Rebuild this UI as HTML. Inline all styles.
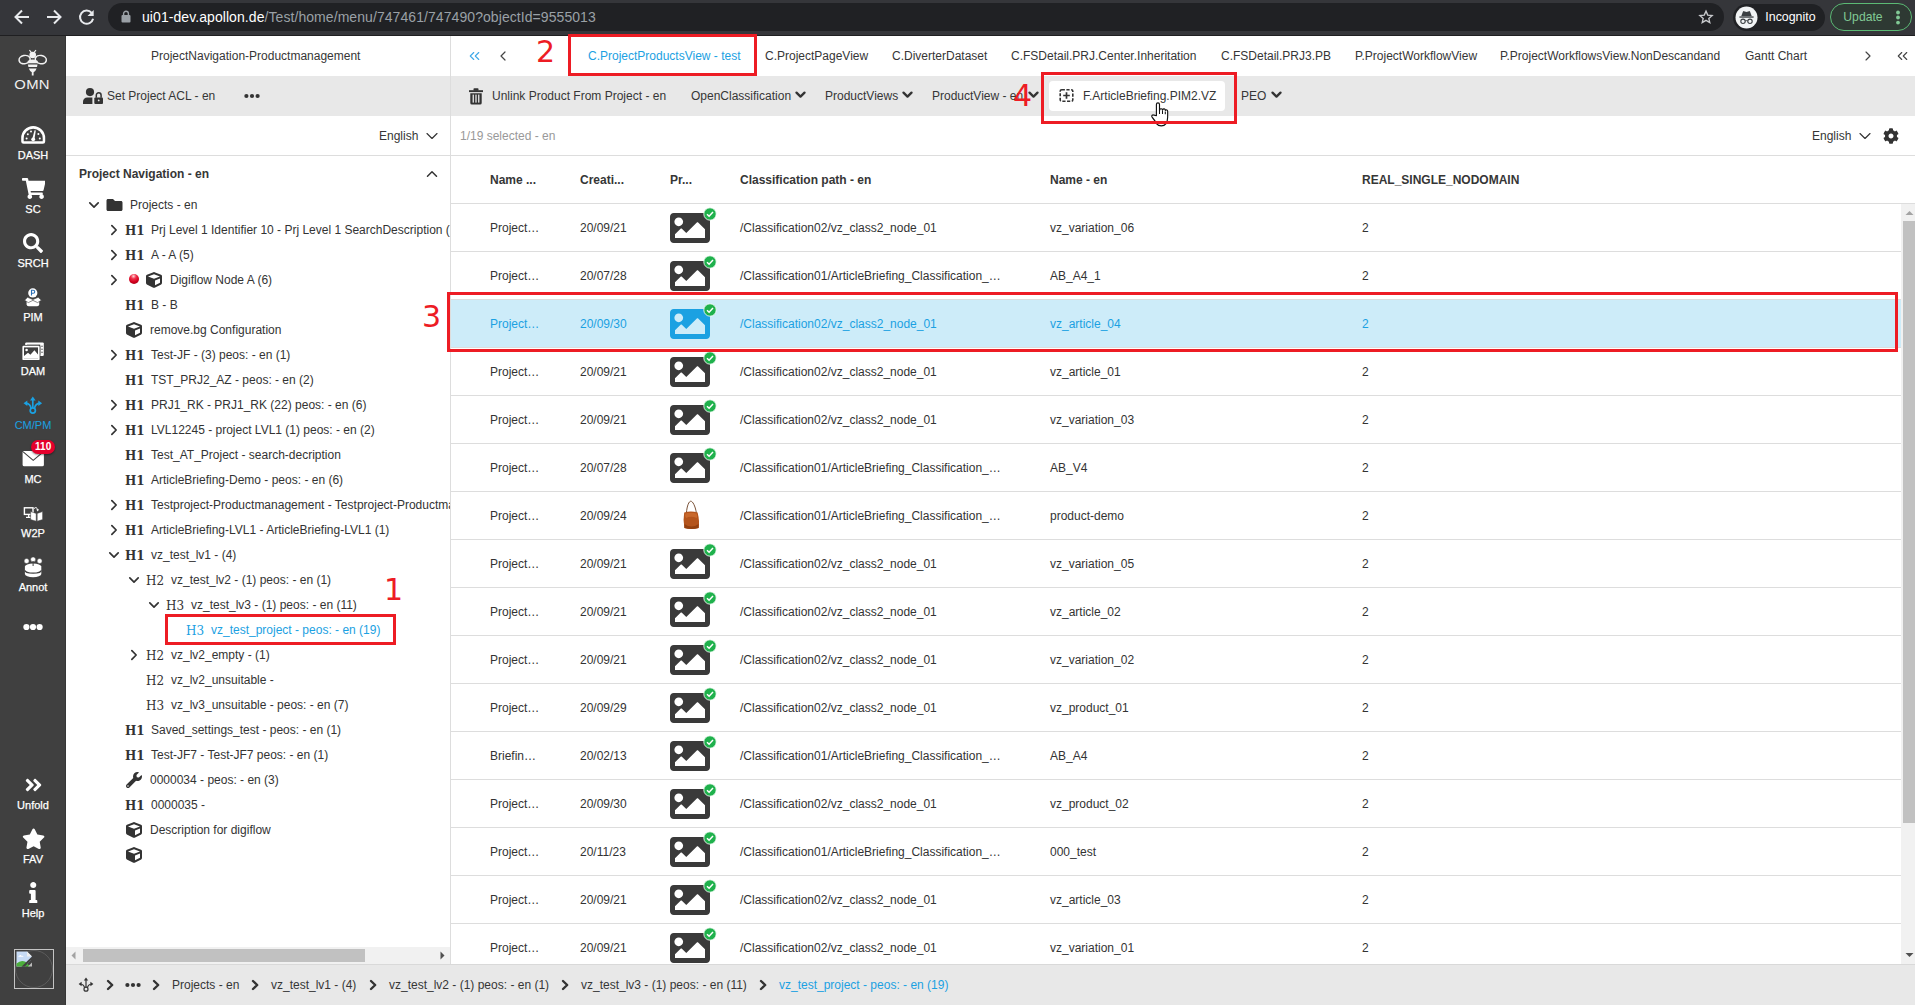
<!DOCTYPE html><html lang="en"><head><meta charset="utf-8"><title>OMN</title><style>
*{box-sizing:border-box;margin:0;padding:0}
html,body{width:1915px;height:1005px;overflow:hidden;background:#fff}
body{font-family:"Liberation Sans",Arial,sans-serif;font-size:12px;color:#363636;position:relative}
.abs,.t,svg.i{position:absolute}
.t{white-space:nowrap;line-height:14px;height:14px}
.b{font-weight:bold}
.blue{color:#1ba1e2}
.w{color:#fff}
#chrome{position:absolute;left:0;top:0;width:1915px;height:36px;background:#35363a;border-bottom:1px solid #1f1f21}
#omni{position:absolute;left:108px;top:3px;width:1616px;height:28px;border-radius:14px;background:#202124}
#side{position:absolute;left:0;top:36px;width:66px;height:969px;background:#404040;border-right:1px solid #363636}
.sl{position:absolute;left:0;width:66px;text-align:center;color:#fff;font-size:11px;line-height:14px;height:14px;-webkit-text-stroke:0.2px #fff}
.grey{position:absolute;background:#e8e8e8}
.hl{position:absolute;height:1px;background:#ddd}
.red{position:absolute;border:3px solid #ed1c24}
.rn{position:absolute;color:#ed1c24;font-family:"DejaVu Sans",sans-serif;font-size:30px;line-height:32px;height:32px}
.hx{position:absolute;font-family:"DejaVu Serif","Liberation Serif",serif;font-size:12px;line-height:14px;height:14px;color:#333;white-space:nowrap}
.hx.b1{font-weight:bold}
</style></head><body>
<div id="chrome"><div id="omni"></div></div>
<svg class="i" style="left:0;top:0" width="110" height="35"><g transform="translate(22,17)" fill="none" stroke="#e8eaed" stroke-width="2" stroke-linecap="butt" stroke-linejoin="miter"><path d="M7,0 H-6 M0,-6.5 L-6.5,0 L0,6.5"/></g></svg>
<svg class="i" style="left:0;top:0" width="110" height="35"><g transform="translate(54,17) scale(-1,1)" fill="none" stroke="#e8eaed" stroke-width="2" stroke-linecap="butt" stroke-linejoin="miter"><path d="M7,0 H-6 M0,-6.5 L-6.5,0 L0,6.5"/></g></svg>
<svg class="i" style="left:78px;top:9px" width="17" height="17" viewBox="-8.5 -8.5 17 17"><path d="M5.2,-4.6 A6.6,6.6 0 1 0 6.6,1.2" fill="none" stroke="#e8eaed" stroke-width="2"/><path d="M7.2,-7.6 V-1.4 H1 Z" fill="#e8eaed"/></svg>
<svg class="i" style="left:121.3px;top:10.3px" width="10" height="13" viewBox="0 0 10 13"><rect x="0.5" y="5" width="9" height="7.5" rx="1" fill="#9aa0a6"/><path d="M2.6,5.5 V3.6 a2.4,2.4 0 0 1 4.8,0 V5.5" fill="none" stroke="#9aa0a6" stroke-width="1.4"/></svg>
<div class="t" style="left:142px;top:8px;font-size:14px;line-height:18px;height:18px;letter-spacing:0.07px;color:#9aa0a6"><span style="color:#fff">ui01-dev.apollon.de</span>/Test/home/menu/747461/747490?objectId=9555013</div>
<svg class="i" style="left:1697.7px;top:9.4px" width="16" height="16" viewBox="0 0 24 24"><path d="M12,3.2 L14.6,9.2 L21.2,9.8 L16.2,14.1 L17.7,20.5 L12,17.1 L6.3,20.5 L7.8,14.1 L2.8,9.8 L9.4,9.2 Z" fill="none" stroke="#c8cacd" stroke-width="2" stroke-linejoin="miter"/></svg>
<div class="abs" style="left:1733px;top:4px;width:92px;height:27px;border-radius:14px;background:#202124"></div>
<svg class="i" style="left:1735px;top:6px" width="23" height="23" viewBox="0 0 23 23"><circle cx="11.5" cy="11.5" r="11" fill="#f1f3f4"/><path d="M6.2,10.2 L8,5.6 Q8.3,4.9 9,5.2 L11.5,6 L14,5.2 Q14.7,4.9 15,5.6 L16.8,10.2 Z" fill="#3c4043"/><rect x="4.4" y="10.4" width="14.2" height="1.3" fill="#3c4043"/><circle cx="8" cy="15.3" r="2.2" fill="none" stroke="#3c4043" stroke-width="1.1"/><circle cx="15" cy="15.3" r="2.2" fill="none" stroke="#3c4043" stroke-width="1.1"/><path d="M10.2,15 Q11.5,14.2 12.8,15" fill="none" stroke="#3c4043" stroke-width="1"/></svg>
<div class="t w" style="left:1765.3px;top:8px;font-size:12.4px;line-height:18px;height:18px">Incognito</div>
<div class="abs" style="left:1830px;top:3px;width:82px;height:28px;border-radius:14px;border:1.4px solid #5bb974;background:#2e3933"></div>
<div class="t" style="left:1843.3px;top:8px;font-size:12.2px;line-height:18px;height:18px;color:#81c995">Update</div>
<svg class="i" style="left:1895.4px;top:9px" width="6" height="17" viewBox="0 0 6 17"><circle cx="3" cy="3.5" r="1.9" fill="#81c995"/><circle cx="3" cy="8.5" r="1.9" fill="#81c995"/><circle cx="3" cy="13.6" r="1.9" fill="#81c995"/></svg>
<div id="side"></div>
<svg class="i" style="left:0;top:0" width="66" height="1005" viewBox="0 0 66 1005"><g fill="none" stroke="#f2f2f2" stroke-width="1.5"><ellipse cx="24.6" cy="59.6" rx="5.6" ry="4.1" transform="rotate(-12 24.6 59.6)"/><ellipse cx="40.8" cy="59.6" rx="5.6" ry="4.1" transform="rotate(12 40.8 59.6)"/><path d="M31.3,52.4 L29.4,50.2 M34.1,52.4 L36,50.2" stroke-width="1.1"/></g><circle cx="32.7" cy="55" r="3.3" fill="#f2f2f2"/><path d="M27.6,61 Q32.7,58.2 37.8,61 L37.6,63.2 H27.8 Z M27.9,64.6 H37.5 L37,67 H28.4 Z M28.8,68.4 H36.6 Q35.6,71.2 33.6,72.2 V75.6 H31.8 V72.2 Q29.8,71.2 28.8,68.4 Z" fill="#f2f2f2"/><path d="M21.2,138 A12,12 0 0 1 45.2,138 V141.4 a2.3,2.3 0 0 1 -2.3,2.3 H23.5 a2.3,2.3 0 0 1 -2.3,-2.3 Z" fill="#fff"/><path d="M23.7,138.2 A9.5,9.5 0 0 1 42.7,138.2 V141.2 H23.7 Z" fill="#404040"/><g fill="#fff"><circle cx="26.6" cy="138.4" r="1"/><circle cx="27.8" cy="134.2" r="1"/><circle cx="31" cy="131.4" r="1"/><circle cx="38.4" cy="134" r="1"/><circle cx="39.8" cy="138.4" r="1"/><circle cx="33.2" cy="139.3" r="1.9"/><path d="M32.2,139 L34.6,130.2 L35.8,130.5 L34.4,139.4 Z"/></g><circle cx="32.8" cy="292.9" r="4.6" fill="#fff"/><path d="M31.5,295.6 V290.2 H33.2 a1.55,1.55 0 0 1 0,3.1 H31.5" fill="none" stroke="#2a6fb5" stroke-width="1.1"/><path d="M26.6,300.5 H39.2 V304.3 Q39.2,306.2 37.2,306.2 H28.6 Q26.6,306.2 26.6,304.3 Z" fill="#fff"/><path d="M24.6,300.2 L27.6,297.3 L32.9,299.6 L38.2,297.3 L41.4,300.2 L37.6,302.6 L32.9,300.4 L28.3,302.6 Z" fill="#fff" stroke="#404040" stroke-width="0.6"/><rect x="25.2" y="342.4" width="18.6" height="13.6" rx="1.2" fill="#fff"/><rect x="26.8" y="344.6" width="13.4" height="10" fill="#404040"/><g fill="#404040"><circle cx="42" cy="346.2" r="0.7"/><circle cx="42" cy="349.2" r="0.7"/><circle cx="42" cy="352.2" r="0.7"/></g><rect x="21.6" y="345" width="18.8" height="15.8" rx="1.4" fill="#404040"/><rect x="22.4" y="345.8" width="17.2" height="14.3" rx="1.2" fill="#fff"/><rect x="24" y="347.4" width="14" height="11" fill="#404040"/><circle cx="26.6" cy="350" r="1.3" fill="#fff"/><path d="M24,358.4 V356 L28,352.8 L30.4,354.8 L34.4,350.2 L38,354.6 V358.4 Z" fill="#fff"/><g fill="none" stroke="#1ba1e2" stroke-width="1.7"><circle cx="32.8" cy="410.6" r="2.6"/><path d="M32.8,408 V399.5"/><path d="M31.2,408.6 Q30.2,403.6 25.6,403.2"/><path d="M34.4,408.6 Q35.4,403.6 40,403.2"/></g><g fill="#1ba1e2"><path d="M32.8,396.6 L35.6,400.4 H30 Z"/><path d="M23.5,403.2 L27.3,400.5 V405.9 Z"/><path d="M42.1,403.2 L38.3,400.5 V405.9 Z"/></g><rect x="22.6" y="451" width="21.3" height="15.3" rx="1.6" fill="#fff"/><path d="M23.2,451.8 L33.2,460.4 L43.3,451.8" fill="none" stroke="#404040" stroke-width="1.1"/><rect x="24.4" y="507.8" width="8.6" height="6.6" fill="none" stroke="#fff" stroke-width="1.4"/><path d="M26,517.4 H31.4 M28.7,514.6 V517.2" stroke="#fff" stroke-width="1.3" fill="none"/><path d="M34,508.6 Q36.6,506 37.6,509.8" fill="none" stroke="#fff" stroke-width="1"/><path d="M36.2,509.6 L37.8,511.6 L39,509.2 Z" fill="#fff"/><path d="M30.6,511.6 L36.2,513.4 V521.2 L30.6,519.6 Z M37.2,513.4 L42.6,511.6 V519.6 L37.2,521.2 Z" fill="#fff" stroke="#404040" stroke-width="0.5"/><path d="M24.9,566.6 V574 a8.2,3.2 0 0 0 16.4,0 V566.6 Z" fill="#fff"/><ellipse cx="33.1" cy="566.6" rx="8.2" ry="3" fill="#fff"/><path d="M24.9,570.2 a8.2,3 0 0 0 16.4,0" fill="none" stroke="#404040" stroke-width="1.2"/><g fill="#fff" stroke="#404040" stroke-width="0.5"><circle cx="26.6" cy="561" r="2.5"/><circle cx="39.6" cy="561" r="2.5"/><circle cx="33.1" cy="559.4" r="2.5"/></g><path d="M33.1,561 V566" stroke="#404040" stroke-width="1" /></svg>
<div class="sl" style="top:77px;left:-0.8px;font-size:13.5px;line-height:16px;height:16px;letter-spacing:0.3px;transform:scaleX(1.1);transform-origin:32px 0;color:#f0f0f0;-webkit-text-stroke:0">OMN</div>
<div class="sl" style="top:148px;color:#fff;-webkit-text-stroke:0.25px #fff">DASH</div>
<div class="sl" style="top:202px;color:#fff;-webkit-text-stroke:0.25px #fff">SC</div>
<div class="sl" style="top:256px;color:#fff;-webkit-text-stroke:0.25px #fff">SRCH</div>
<div class="sl" style="top:310px;color:#fff;-webkit-text-stroke:0.25px #fff">PIM</div>
<div class="sl" style="top:364px;color:#fff;-webkit-text-stroke:0.25px #fff">DAM</div>
<div class="sl" style="top:418px;color:#1ba1e2;-webkit-text-stroke:0px #1ba1e2">CM/PM</div>
<div class="sl" style="top:472px;color:#fff;-webkit-text-stroke:0.25px #fff">MC</div>
<div class="sl" style="top:526px;color:#fff;-webkit-text-stroke:0.25px #fff">W2P</div>
<div class="sl" style="top:580px;color:#fff;-webkit-text-stroke:0.25px #fff">Annot</div>
<div class="sl" style="top:798px;color:#fff;-webkit-text-stroke:0.25px #fff">Unfold</div>
<div class="sl" style="top:852px;color:#fff;-webkit-text-stroke:0.25px #fff">FAV</div>
<div class="sl" style="top:906px;color:#fff;-webkit-text-stroke:0.25px #fff">Help</div>
<svg class="i" style="left:21px;top:620.6px" width="24" height="12" viewBox="-12 -6 24 12"><circle cx="-6.6" cy="0" r="3.1" fill="#fff"/><circle cx="0" cy="0" r="3.1" fill="#fff"/><circle cx="6.6" cy="0" r="3.1" fill="#fff"/></svg>
<svg class="i" style="left:21.5px;top:178px" width="23.5" height="21" viewBox="0 0 576 512" preserveAspectRatio="xMidYMid meet"><path d="M528.12 301.319l47.273-208C578.806 78.301 567.391 64 551.99 64H159.208l-9.166-44.81C147.758 8.021 137.93 0 126.529 0H24C10.745 0 0 10.745 0 24v16c0 13.255 10.745 24 24 24h69.883l70.248 343.435C147.325 417.1 136 435.222 136 456c0 30.928 25.072 56 56 56s56-25.072 56-56c0-15.674-6.447-29.835-16.824-40h209.647C430.447 426.165 424 440.326 424 456c0 30.928 25.072 56 56 56s56-25.072 56-56c0-22.172-12.888-41.332-31.579-50.405l5.517-24.276c3.413-15.018-8.002-29.319-23.403-29.319H218.117l-6.545-32h293.145c11.206 0 20.92-7.754 23.403-18.681z" fill="#fff" /></svg>
<svg class="i" style="left:22.5px;top:233px" width="20" height="20" viewBox="0 0 512 512" preserveAspectRatio="xMidYMid meet"><path d="M505 442.7L405.3 343c-4.5-4.5-10.6-7-17-7H372c27.6-35.3 44-79.7 44-128C416 93.1 322.9 0 208 0S0 93.1 0 208s93.1 208 208 208c48.3 0 92.7-16.4 128-44v16.3c0 6.4 2.5 12.5 7 17l99.7 99.7c9.4 9.4 24.6 9.4 33.9 0l28.3-28.3c9.4-9.4 9.4-24.6.1-34zM208 336c-70.7 0-128-57.2-128-128 0-70.7 57.2-128 128-128 70.7 0 128 57.2 128 128 0 70.7-57.2 128-128 128z" fill="#fff" /></svg>
<svg class="i" style="left:21.6px;top:827.6px" width="23.2" height="21.6" viewBox="0 0 576 512" preserveAspectRatio="xMidYMid meet"><path d="M259.3 17.8L194 150.2 47.9 171.5c-26.2 3.8-36.7 36.1-17.7 54.6l105.7 103-25 145.5c-4.5 26.3 23.2 46 46.4 33.7L288 439.6l130.7 68.7c23.2 12.2 50.9-7.4 46.4-33.7l-25-145.5 105.7-103c19-18.5 8.5-50.8-17.7-54.6L382 150.2 316.7 17.8c-11.7-23.6-45.6-23.9-57.4 0z" fill="#fff" /></svg>
<svg class="i" style="left:29px;top:881.8px" width="8.5" height="21.6" viewBox="0 0 192 512" preserveAspectRatio="xMidYMid meet"><path d="M20 424.229h20V279.771H20c-11.046 0-20-8.954-20-20V212c0-11.046 8.954-20 20-20h112c11.046 0 20 8.954 20 20v212.229h20c11.046 0 20 8.954 20 20V492c0 11.046-8.954 20-20 20H20c-11.046 0-20-8.954-20-20v-47.771c0-11.046 8.954-20 20-20zM96 0C56.235 0 24 32.235 24 72s32.235 72 72 72 72-32.235 72-72S135.764 0 96 0z" fill="#fff" /></svg>
<svg class="i" style="left:23.6px;top:774.6px" width="19" height="20" viewBox="0 0 448 512" preserveAspectRatio="xMidYMid meet"><path d="M224.3 273l-136 136c-9.4 9.4-24.6 9.4-33.9 0l-22.6-22.6c-9.4-9.4-9.4-24.6 0-33.9l96.4-96.4-96.4-96.4c-9.4-9.4-9.4-24.6 0-33.9L54.3 103c9.4-9.4 24.6-9.4 33.9 0l136 136c9.5 9.4 9.5 24.6.1 34zm192-34l-136-136c-9.4-9.4-24.6-9.4-33.9 0l-22.6 22.6c-9.4 9.4-9.4 24.6 0 33.9l96.4 96.4-96.4 96.4c-9.4 9.4-9.4 24.6 0 33.9l22.6 22.6c9.4 9.4 24.6 9.4 33.9 0l136-136c9.4-9.2 9.4-24.4 0-33.8z" fill="#fff" /></svg>
<div class="abs" style="left:31.4px;top:440px;width:23.6px;height:14px;border-radius:7px;background:#e4002b;box-shadow:0 1px 2px rgba(0,0,0,.45);color:#fff;font-size:10px;font-weight:bold;line-height:14px;text-align:center">110</div>
<div class="abs" style="left:14px;top:949px;width:40px;height:40px;border:1px solid #c4c4c4"></div>
<div class="abs" style="left:15px;top:949.5px;width:38px;height:38px;border-radius:19px;border:1px solid #5c5c5c"></div>
<svg class="i" style="left:16px;top:951px" width="17" height="17" viewBox="0 0 17 17"><path d="M0.5,0.5 H11 L16,5.5 V8 L9,15.5 H0.5 Z" fill="#c7dbf5"/><path d="M11,0.5 V5.5 H16 Z" fill="#eee"/><path d="M0.5,15.5 V12.5 Q5,8.5 9.5,10.8 L14,15.5 Z" fill="#4caf3c"/><path d="M3,5 q1.4,-2 2.8,0 q1.2,-0.6 1.8,0.8 H2.2 Q2.2,5 3,5" fill="#fff"/><path d="M16,8.2 L8.6,15.8 H5.4 L16,5.6 Z" fill="#404040"/><path d="M12,15.5 H16 V11.6 Z" fill="#bcbcbc"/></svg>

<div class="t " style="left:151px;top:49px;">ProjectNavigation-Productmanagement</div>
<div class="grey" style="left:66px;top:76px;width:1849px;height:40px"></div>
<div class="t " style="left:107px;top:89px;">Set Project ACL - en</div>
<svg class="i" style="left:82px;top:87px" width="22" height="18" viewBox="82 87 22 18"><circle cx="90" cy="92.1" r="4.1" fill="#333"/><path d="M83,104 V101.6 a4.2,4.2 0 0 1 4.2,-4.2 h5.2 v6.6 Z" fill="#333"/><rect x="94.3" y="97.4" width="8.7" height="6.6" rx="1" fill="#333"/><path d="M96.3,97.8 V95.2 a2.4,2.4 0 0 1 4.8,0 V97.8" fill="none" stroke="#333" stroke-width="1.5"/><circle cx="98.7" cy="100.4" r="0.9" fill="#e8e8e8"/></svg>
<svg class="i" style="left:240.4px;top:90px" width="24" height="12" viewBox="-12 -6 24 12"><circle cx="-5.6" cy="0" r="2.1" fill="#333"/><circle cx="0" cy="0" r="2.1" fill="#333"/><circle cx="5.6" cy="0" r="2.1" fill="#333"/></svg>
<div class="t " style="left:379px;top:129px;">English</div>
<svg class="i" style="left:422px;top:126px" width="20" height="20" viewBox="-10 -10 20 20"><path d="M-5,-2.5 L0,2.5 L5,-2.5" fill="none" stroke="#333" stroke-width="1.15" stroke-linecap="round" stroke-linejoin="round"/></svg>
<div class="hl" style="left:66px;top:155px;width:1849px"></div>
<div class="t b" style="left:79px;top:167px;">Project Navigation - en</div>
<svg class="i" style="left:422px;top:164.2px" width="20" height="20" viewBox="-10 -10 20 20"><path d="M-4.5,2.25 L0,-2.25 L4.5,2.25" fill="none" stroke="#333" stroke-width="1.5" stroke-linecap="round" stroke-linejoin="round"/></svg>
<div class="abs" style="left:66px;top:160px;width:384px;height:780px;overflow:hidden"><div class="abs" style="left:-66px;top:-160px;width:600px;height:1005px">
<svg class="i" style="left:83.8px;top:195.1px" width="20" height="20" viewBox="-10 -10 20 20"><path d="M-4.2,-2.1 L0,2.1 L4.2,-2.1" fill="none" stroke="#333" stroke-width="1.7" stroke-linecap="round" stroke-linejoin="round"/></svg>
<svg class="i" style="left:105.5px;top:196.7px" width="17" height="16" viewBox="0 0 512 512" preserveAspectRatio="xMidYMid meet"><path d="M464 128H272l-64-64H48C21.49 64 0 85.49 0 112v288c0 26.51 21.49 48 48 48h416c26.51 0 48-21.49 48-48V176c0-26.51-21.49-48-48-48z" fill="#333" /></svg>
<div class="t " style="left:130px;top:198px;color:#333">Projects - en</div>
<svg class="i" style="left:104px;top:219.8px" width="20" height="20" viewBox="-10 -10 20 20"><path d="M-2.15,-4.3 L2.15,0 L-2.15,4.3" fill="none" stroke="#333" stroke-width="1.7" stroke-linecap="round" stroke-linejoin="round"/></svg>
<div class="hx b1" style="left:125px;top:224px;color:#333">H1</div>
<div class="t " style="left:151px;top:223px;color:#333">Prj Level 1 Identifier 10 - Prj Level 1 SearchDescription (</div>
<svg class="i" style="left:104px;top:244.8px" width="20" height="20" viewBox="-10 -10 20 20"><path d="M-2.15,-4.3 L2.15,0 L-2.15,4.3" fill="none" stroke="#333" stroke-width="1.7" stroke-linecap="round" stroke-linejoin="round"/></svg>
<div class="hx b1" style="left:125px;top:249px;color:#333">H1</div>
<div class="t " style="left:151px;top:248px;color:#333">A - A (5)</div>
<svg class="i" style="left:104px;top:269.8px" width="20" height="20" viewBox="-10 -10 20 20"><path d="M-2.15,-4.3 L2.15,0 L-2.15,4.3" fill="none" stroke="#333" stroke-width="1.7" stroke-linecap="round" stroke-linejoin="round"/></svg>
<div class="abs" style="left:129px;top:274px;width:10px;height:10px;border-radius:5px;background:radial-gradient(circle at 45% 22%,#ffd9d9 0,#f0304a 28%,#d3001e 60%,#8a0012 100%)"></div>
<svg class="i" style="left:146px;top:271.8px" width="16" height="16" viewBox="0 0 512 512" preserveAspectRatio="xMidYMid meet"><path d="M239.1 6.3l-208 78c-18.7 7-31.1 25-31.1 45v225.1c0 18.2 10.3 34.8 26.5 42.9l208 104c13.5 6.8 29.4 6.8 42.9 0l208-104c16.3-8.1 26.5-24.8 26.5-42.9V129.3c0-20-12.4-37.9-31.1-44.9l-208-78C262 2.2 250 2.2 239.1 6.3zM256 68.4l192 72v1.1l-192 78-192-78v-1.1l192-72zm32 356V275.5l160-65v133.9l-160 80z" fill="#333" /></svg>
<div class="t " style="left:170px;top:273px;color:#333">Digiflow Node A (6)</div>
<div class="hx b1" style="left:125px;top:299px;color:#333">H1</div>
<div class="t " style="left:151px;top:298px;color:#333">B - B</div>
<svg class="i" style="left:126px;top:321.8px" width="16" height="16" viewBox="0 0 512 512" preserveAspectRatio="xMidYMid meet"><path d="M239.1 6.3l-208 78c-18.7 7-31.1 25-31.1 45v225.1c0 18.2 10.3 34.8 26.5 42.9l208 104c13.5 6.8 29.4 6.8 42.9 0l208-104c16.3-8.1 26.5-24.8 26.5-42.9V129.3c0-20-12.4-37.9-31.1-44.9l-208-78C262 2.2 250 2.2 239.1 6.3zM256 68.4l192 72v1.1l-192 78-192-78v-1.1l192-72zm32 356V275.5l160-65v133.9l-160 80z" fill="#333" /></svg>
<div class="t " style="left:150px;top:323px;color:#333">remove.bg Configuration</div>
<svg class="i" style="left:104px;top:344.8px" width="20" height="20" viewBox="-10 -10 20 20"><path d="M-2.15,-4.3 L2.15,0 L-2.15,4.3" fill="none" stroke="#333" stroke-width="1.7" stroke-linecap="round" stroke-linejoin="round"/></svg>
<div class="hx b1" style="left:125px;top:349px;color:#333">H1</div>
<div class="t " style="left:151px;top:348px;color:#333">Test-JF - (3) peos: - en (1)</div>
<div class="hx b1" style="left:125px;top:374px;color:#333">H1</div>
<div class="t " style="left:151px;top:373px;color:#333">TST_PRJ2_AZ - peos: - en (2)</div>
<svg class="i" style="left:104px;top:394.8px" width="20" height="20" viewBox="-10 -10 20 20"><path d="M-2.15,-4.3 L2.15,0 L-2.15,4.3" fill="none" stroke="#333" stroke-width="1.7" stroke-linecap="round" stroke-linejoin="round"/></svg>
<div class="hx b1" style="left:125px;top:399px;color:#333">H1</div>
<div class="t " style="left:151px;top:398px;color:#333">PRJ1_RK - PRJ1_RK (22) peos: - en (6)</div>
<svg class="i" style="left:104px;top:419.8px" width="20" height="20" viewBox="-10 -10 20 20"><path d="M-2.15,-4.3 L2.15,0 L-2.15,4.3" fill="none" stroke="#333" stroke-width="1.7" stroke-linecap="round" stroke-linejoin="round"/></svg>
<div class="hx b1" style="left:125px;top:424px;color:#333">H1</div>
<div class="t " style="left:151px;top:423px;color:#333">LVL12245 - project LVL1 (1) peos: - en (2)</div>
<div class="hx b1" style="left:125px;top:449px;color:#333">H1</div>
<div class="t " style="left:151px;top:448px;color:#333">Test_AT_Project - search-decription</div>
<div class="hx b1" style="left:125px;top:474px;color:#333">H1</div>
<div class="t " style="left:151px;top:473px;color:#333">ArticleBriefing-Demo - peos: - en (6)</div>
<svg class="i" style="left:104px;top:494.8px" width="20" height="20" viewBox="-10 -10 20 20"><path d="M-2.15,-4.3 L2.15,0 L-2.15,4.3" fill="none" stroke="#333" stroke-width="1.7" stroke-linecap="round" stroke-linejoin="round"/></svg>
<div class="hx b1" style="left:125px;top:499px;color:#333">H1</div>
<div class="t " style="left:151px;top:498px;color:#333">Testproject-Productmanagement - Testproject-Productmanagement</div>
<svg class="i" style="left:104px;top:519.8px" width="20" height="20" viewBox="-10 -10 20 20"><path d="M-2.15,-4.3 L2.15,0 L-2.15,4.3" fill="none" stroke="#333" stroke-width="1.7" stroke-linecap="round" stroke-linejoin="round"/></svg>
<div class="hx b1" style="left:125px;top:524px;color:#333">H1</div>
<div class="t " style="left:151px;top:523px;color:#333">ArticleBriefing-LVL1 - ArticleBriefing-LVL1 (1)</div>
<svg class="i" style="left:103.8px;top:545.1px" width="20" height="20" viewBox="-10 -10 20 20"><path d="M-4.2,-2.1 L0,2.1 L4.2,-2.1" fill="none" stroke="#333" stroke-width="1.7" stroke-linecap="round" stroke-linejoin="round"/></svg>
<div class="hx b1" style="left:125px;top:549px;color:#333">H1</div>
<div class="t " style="left:151px;top:548px;color:#333">vz_test_lv1 - (4)</div>
<svg class="i" style="left:123.80000000000001px;top:570.1px" width="20" height="20" viewBox="-10 -10 20 20"><path d="M-4.2,-2.1 L0,2.1 L4.2,-2.1" fill="none" stroke="#333" stroke-width="1.7" stroke-linecap="round" stroke-linejoin="round"/></svg>
<div class="hx" style="left:146px;top:574px;color:#333">H2</div>
<div class="t " style="left:171px;top:573px;color:#333">vz_test_lv2 - (1) peos: - en (1)</div>
<svg class="i" style="left:143.8px;top:595.1px" width="20" height="20" viewBox="-10 -10 20 20"><path d="M-4.2,-2.1 L0,2.1 L4.2,-2.1" fill="none" stroke="#333" stroke-width="1.7" stroke-linecap="round" stroke-linejoin="round"/></svg>
<div class="hx" style="left:166px;top:599px;color:#333">H3</div>
<div class="t " style="left:191px;top:598px;color:#333">vz_test_lv3 - (1) peos: - en (11)</div>
<div class="hx" style="left:186px;top:624px;color:#1ba1e2">H3</div>
<div class="t " style="left:211px;top:623px;color:#1ba1e2">vz_test_project - peos: - en (19)</div>
<svg class="i" style="left:124px;top:644.8px" width="20" height="20" viewBox="-10 -10 20 20"><path d="M-2.15,-4.3 L2.15,0 L-2.15,4.3" fill="none" stroke="#333" stroke-width="1.7" stroke-linecap="round" stroke-linejoin="round"/></svg>
<div class="hx" style="left:146px;top:649px;color:#333">H2</div>
<div class="t " style="left:171px;top:648px;color:#333">vz_lv2_empty - (1)</div>
<div class="hx" style="left:146px;top:674px;color:#333">H2</div>
<div class="t " style="left:171px;top:673px;color:#333">vz_lv2_unsuitable -</div>
<div class="hx" style="left:146px;top:699px;color:#333">H3</div>
<div class="t " style="left:171px;top:698px;color:#333">vz_lv3_unsuitable - peos: - en (7)</div>
<div class="hx b1" style="left:125px;top:724px;color:#333">H1</div>
<div class="t " style="left:151px;top:723px;color:#333">Saved_settings_test - peos: - en (1)</div>
<div class="hx b1" style="left:125px;top:749px;color:#333">H1</div>
<div class="t " style="left:151px;top:748px;color:#333">Test-JF7 - Test-JF7 peos: - en (1)</div>
<svg class="i" style="left:126px;top:771.8px" width="16" height="16" viewBox="0 0 512 512" preserveAspectRatio="xMidYMid meet"><path d="M507.73 109.1c-2.24-9.03-13.54-12.09-20.12-5.51l-74.36 74.36-67.88-11.31-11.31-67.88 74.36-74.36c6.62-6.62 3.43-17.9-5.66-20.16-47.38-11.74-99.55.91-136.58 37.93-39.64 39.64-50.55 97.1-34.05 147.2L18.74 402.76c-24.99 24.99-24.99 65.51 0 90.5 24.99 24.99 65.51 24.99 90.5 0l213.21-213.21c50.12 16.71 107.47 5.68 147.37-34.22 37.07-37.07 49.7-89.32 37.91-136.73zM64 472c-13.25 0-24-10.75-24-24 0-13.26 10.75-24 24-24s24 10.74 24 24c0 13.25-10.75 24-24 24z" fill="#333" /></svg>
<div class="t " style="left:150px;top:773px;color:#333">0000034 - peos: - en (3)</div>
<div class="hx b1" style="left:125px;top:799px;color:#333">H1</div>
<div class="t " style="left:151px;top:798px;color:#333">0000035 -</div>
<svg class="i" style="left:126px;top:821.8px" width="16" height="16" viewBox="0 0 512 512" preserveAspectRatio="xMidYMid meet"><path d="M239.1 6.3l-208 78c-18.7 7-31.1 25-31.1 45v225.1c0 18.2 10.3 34.8 26.5 42.9l208 104c13.5 6.8 29.4 6.8 42.9 0l208-104c16.3-8.1 26.5-24.8 26.5-42.9V129.3c0-20-12.4-37.9-31.1-44.9l-208-78C262 2.2 250 2.2 239.1 6.3zM256 68.4l192 72v1.1l-192 78-192-78v-1.1l192-72zm32 356V275.5l160-65v133.9l-160 80z" fill="#333" /></svg>
<div class="t " style="left:150px;top:823px;color:#333">Description for digiflow</div>
<svg class="i" style="left:126px;top:846.8px" width="16" height="16" viewBox="0 0 512 512" preserveAspectRatio="xMidYMid meet"><path d="M239.1 6.3l-208 78c-18.7 7-31.1 25-31.1 45v225.1c0 18.2 10.3 34.8 26.5 42.9l208 104c13.5 6.8 29.4 6.8 42.9 0l208-104c16.3-8.1 26.5-24.8 26.5-42.9V129.3c0-20-12.4-37.9-31.1-44.9l-208-78C262 2.2 250 2.2 239.1 6.3zM256 68.4l192 72v1.1l-192 78-192-78v-1.1l192-72zm32 356V275.5l160-65v133.9l-160 80z" fill="#333" /></svg>
</div></div>
<div class="red" style="left:165px;top:614px;width:231px;height:31px"></div>
<div class="rn" style="left:384px;top:574px">1</div>
<div class="abs" style="left:66px;top:947px;width:384px;height:17px;background:#f1f1f1"></div>
<div class="abs" style="left:83px;top:949px;width:282px;height:13px;background:#c1c1c1"></div>
<svg class="i" style="left:66px;top:947px" width="384" height="17"><path d="M71.5,8.5 l4,-4 v8z" fill="#a3a3a3" transform="translate(-66,0)"/><path d="M444.5,8.5 l-4,-4 v8z" fill="#505050" transform="translate(-66,0)"/></svg>
<div class="abs" style="left:450px;top:36px;width:1px;height:929px;background:#ddd"></div>
<div class="t blue" style="left:588px;top:49px;">C.ProjectProductsView - test</div>
<div class="t " style="left:765px;top:49px;">C.ProjectPageView</div>
<div class="t " style="left:892px;top:49px;">C.DiverterDataset</div>
<div class="t " style="left:1011px;top:49px;">C.FSDetail.PRJ.Center.Inheritation</div>
<div class="t " style="left:1221px;top:49px;">C.FSDetail.PRJ3.PB</div>
<div class="t " style="left:1355px;top:49px;">P.ProjectWorkflowView</div>
<div class="t " style="left:1500px;top:49px;">P.ProjectWorkflowsView.NonDescandand</div>
<div class="t " style="left:1745px;top:49px;">Gantt Chart</div>
<svg class="i" style="left:462px;top:46.3px" width="20" height="20" viewBox="-10 -10 20 20"><path d="M1.75,-3.5 L-1.75,0 L1.75,3.5" fill="none" stroke="#3fa9e8" stroke-width="1.1" stroke-linecap="round" stroke-linejoin="round"/></svg>
<svg class="i" style="left:467px;top:46.3px" width="20" height="20" viewBox="-10 -10 20 20"><path d="M1.75,-3.5 L-1.75,0 L1.75,3.5" fill="none" stroke="#3fa9e8" stroke-width="1.1" stroke-linecap="round" stroke-linejoin="round"/></svg>
<svg class="i" style="left:492.5px;top:46.2px" width="20" height="20" viewBox="-10 -10 20 20"><path d="M2.0,-4 L-2.0,0 L2.0,4" fill="none" stroke="#444" stroke-width="1.2" stroke-linecap="round" stroke-linejoin="round"/></svg>
<svg class="i" style="left:1858px;top:46.2px" width="20" height="20" viewBox="-10 -10 20 20"><path d="M-2.0,-4 L2.0,0 L-2.0,4" fill="none" stroke="#444" stroke-width="1.15" stroke-linecap="round" stroke-linejoin="round"/></svg>
<svg class="i" style="left:1889.5px;top:46.3px" width="20" height="20" viewBox="-10 -10 20 20"><path d="M1.75,-3.5 L-1.75,0 L1.75,3.5" fill="none" stroke="#444" stroke-width="1.1" stroke-linecap="round" stroke-linejoin="round"/></svg>
<svg class="i" style="left:1894.5px;top:46.3px" width="20" height="20" viewBox="-10 -10 20 20"><path d="M1.75,-3.5 L-1.75,0 L1.75,3.5" fill="none" stroke="#444" stroke-width="1.1" stroke-linecap="round" stroke-linejoin="round"/></svg>
<div class="rn" style="left:536px;top:36px">2</div>
<div class="red" style="left:568px;top:34px;width:189px;height:42px"></div>
<svg class="i" style="left:469px;top:87.8px" width="14" height="17" viewBox="0 0 14 17"><rect x="0" y="2.2" width="14" height="1.9" fill="#333"/><rect x="4.5" y="0.3" width="5" height="2.4" rx="0.8" fill="#333"/><path d="M1.3,5.2 H12.7 V15 a1.6,1.6 0 0 1 -1.6,1.6 H2.9 a1.6,1.6 0 0 1 -1.6,-1.6 Z" fill="#333"/><rect x="3.6" y="6.6" width="1.3" height="8" fill="#e8e8e8"/><rect x="6.35" y="6.6" width="1.3" height="8" fill="#e8e8e8"/><rect x="9.1" y="6.6" width="1.3" height="8" fill="#e8e8e8"/></svg>
<div class="t " style="left:492px;top:89px;">Unlink Product From Project - en</div>
<div class="t " style="left:691px;top:89px;">OpenClassification</div>
<svg class="i" style="left:795px;top:91px" width="11" height="8" viewBox="0 0 11 8"><path d="M1.5,1.6 L5.5,5.6 L9.5,1.6" fill="none" stroke="#333" stroke-width="2.3" stroke-linecap="round" stroke-linejoin="round"/></svg>
<div class="t " style="left:825px;top:89px;">ProductViews</div>
<svg class="i" style="left:902px;top:91px" width="11" height="8" viewBox="0 0 11 8"><path d="M1.5,1.6 L5.5,5.6 L9.5,1.6" fill="none" stroke="#333" stroke-width="2.3" stroke-linecap="round" stroke-linejoin="round"/></svg>
<div class="t " style="left:932px;top:89px;">ProductView - en</div>
<svg class="i" style="left:1028px;top:91px" width="11" height="8" viewBox="0 0 11 8"><path d="M1.5,1.6 L5.5,5.6 L9.5,1.6" fill="none" stroke="#333" stroke-width="2.3" stroke-linecap="round" stroke-linejoin="round"/></svg>
<div class="abs" style="left:1049px;top:81px;width:176px;height:30px;border-radius:4px;background:#fff"></div>
<svg class="i" style="left:1059px;top:88px" width="15" height="15" viewBox="0 0 15 15"><rect x="1.2" y="1.7" width="12.6" height="11.6" rx="1.5" fill="none" stroke="#333" stroke-width="1.6" stroke-dasharray="3.2 1.5"/><path d="M7.5,4.2 V10.8 M4.2,7.5 H10.8" stroke="#333" stroke-width="1.7" fill="none"/></svg>
<div class="t " style="left:1083px;top:89px;">F.ArticleBriefing.PIM2.VZ</div>
<div class="t " style="left:1241px;top:89px;">PEO</div>
<svg class="i" style="left:1271px;top:91px" width="11" height="8" viewBox="0 0 11 8"><path d="M1.5,1.6 L5.5,5.6 L9.5,1.6" fill="none" stroke="#333" stroke-width="2.3" stroke-linecap="round" stroke-linejoin="round"/></svg>
<div class="rn" style="left:1013px;top:80px">4</div>

<svg class="i" style="left:1150.4px;top:100.5px" width="18.6" height="26.2" viewBox="0 0 18 24" preserveAspectRatio="none"><path d="M6.2,13.5 V3.2 a1.5,1.5 0 0 1 3,0 V9 l0.2,-1 a1.4,1.4 0 0 1 2.7,0.4 l0.2,-0.4 a1.3,1.3 0 0 1 2.5,0.6 l0.3,-0.2 a1.2,1.2 0 0 1 2,0.9 V15 c0,3 -0.8,4.6 -1.8,6 q-1.4,1.8 -4.4,1.8 q-3,0 -4.4,-1.8 C5.6,19 3.8,17 2,14.8 c-1,-1.3 0.6,-2.8 2,-1.8 Z" fill="#fff" stroke="#111" stroke-width="1.1" stroke-linejoin="round"/><path d="M9.2,9 v3 M12.1,9 v3 M14.8,9.6 v2.6" stroke="#111" stroke-width="1" fill="none"/></svg>
<div class="red" style="left:1041px;top:72px;width:196px;height:52px"></div>
<div class="t " style="left:460px;top:129px;color:#999">1/19 selected - en</div>
<div class="t " style="left:1812px;top:129px;">English</div>
<svg class="i" style="left:1855px;top:126px" width="20" height="20" viewBox="-10 -10 20 20"><path d="M-5,-2.5 L0,2.5 L5,-2.5" fill="none" stroke="#333" stroke-width="1.15" stroke-linecap="round" stroke-linejoin="round"/></svg>
<svg class="i" style="left:1883px;top:128px" width="16" height="16" viewBox="0 0 512 512" preserveAspectRatio="xMidYMid meet"><path d="M487.4 315.7l-42.6-24.6c4.3-23.2 4.3-47 0-70.2l42.6-24.6c4.9-2.8 7.1-8.6 5.5-14-11.1-35.6-30-67.8-54.7-94.6-3.8-4.1-10-5.1-14.8-2.3L380.8 110c-17.9-15.4-38.5-27.3-60.8-35.1V25.8c0-5.6-3.9-10.5-9.4-11.7-36.7-8.2-74.3-7.8-109.2 0-5.5 1.2-9.4 6.1-9.4 11.7V75c-22.2 7.9-42.8 19.8-60.8 35.1L88.7 85.5c-4.9-2.8-11-1.9-14.8 2.3-24.7 26.7-43.6 58.9-54.7 94.6-1.7 5.4.6 11.2 5.5 14L67.3 221c-4.3 23.2-4.3 47 0 70.2l-42.6 24.6c-4.9 2.8-7.1 8.6-5.5 14 11.1 35.6 30 67.8 54.7 94.6 3.8 4.1 10 5.1 14.8 2.3l42.6-24.6c17.9 15.4 38.5 27.3 60.8 35.1v49.2c0 5.6 3.9 10.5 9.4 11.7 36.7 8.2 74.3 7.8 109.2 0 5.5-1.2 9.4-6.1 9.4-11.7v-49.2c22.2-7.9 42.8-19.8 60.8-35.1l42.6 24.6c4.9 2.8 11 1.9 14.8-2.3 24.7-26.7 43.6-58.9 54.7-94.6 1.5-5.5-.7-11.3-5.6-14.1zM256 336c-44.1 0-80-35.9-80-80s35.9-80 80-80 80 35.9 80 80-35.9 80-80 80z" fill="#333" /></svg>
<div class="t b" style="left:490px;top:173px;">Name ...</div>
<div class="t b" style="left:580px;top:173px;">Creati...</div>
<div class="t b" style="left:670px;top:173px;">Pr...</div>
<div class="t b" style="left:740px;top:173px;">Classification path - en</div>
<div class="t b" style="left:1050px;top:173px;">Name - en</div>
<div class="t b" style="left:1362px;top:173px;">REAL_SINGLE_NODOMAIN</div>
<div class="abs" style="left:451px;top:156px;width:1450px;height:809px;overflow:hidden"><div class="abs" style="left:-451px;top:-156px;width:1915px;height:1005px">
<div class="hl" style="left:451px;top:203px;width:1450px"></div>
<div class="t " style="left:490px;top:221px;color:#333">Project…</div>
<div class="t " style="left:580px;top:221px;color:#333">20/09/21</div>
<div class="t " style="left:740px;top:221px;color:#333">/Classification02/vz_class2_node_01</div>
<div class="t " style="left:1050px;top:221px;color:#333">vz_variation_06</div>
<div class="t " style="left:1362px;top:221px;color:#333">2</div>
<svg class="i" style="left:670.4px;top:208.1px" width="40" height="40" viewBox="0 0 512 512" preserveAspectRatio="xMidYMid meet"><path d="M464 448H48c-26.51 0-48-21.49-48-48V112c0-26.51 21.49-48 48-48h416c26.51 0 48 21.49 48 48v288c0 26.51-21.49 48-48 48zM112 120c-30.928 0-56 25.072-56 56s25.072 56 56 56 56-25.072 56-56-25.072-56-56-56zM64 384h384V272l-87.515-87.515c-4.686-4.686-12.284-4.686-16.971 0L208 320l-55.515-55.515c-4.686-4.686-12.284-4.686-16.971 0L64 336v48z" fill="#3a3a3a" /></svg>
<svg class="i" style="left:702.5px;top:206.5px" width="14" height="14" viewBox="0 0 14 14"><circle cx="7" cy="7" r="6.2" fill="#1fb14c" stroke="#fff" stroke-width="0.8"/><path d="M4,7.2 L6.1,9.2 L10,5" fill="none" stroke="#fff" stroke-width="1.5"/></svg>
<div class="hl" style="left:451px;top:251px;width:1450px"></div>
<div class="t " style="left:490px;top:269px;color:#333">Project…</div>
<div class="t " style="left:580px;top:269px;color:#333">20/07/28</div>
<div class="t " style="left:740px;top:269px;color:#333">/Classification01/ArticleBriefing_Classification_…</div>
<div class="t " style="left:1050px;top:269px;color:#333">AB_A4_1</div>
<div class="t " style="left:1362px;top:269px;color:#333">2</div>
<svg class="i" style="left:670.4px;top:256.1px" width="40" height="40" viewBox="0 0 512 512" preserveAspectRatio="xMidYMid meet"><path d="M464 448H48c-26.51 0-48-21.49-48-48V112c0-26.51 21.49-48 48-48h416c26.51 0 48 21.49 48 48v288c0 26.51-21.49 48-48 48zM112 120c-30.928 0-56 25.072-56 56s25.072 56 56 56 56-25.072 56-56-25.072-56-56-56zM64 384h384V272l-87.515-87.515c-4.686-4.686-12.284-4.686-16.971 0L208 320l-55.515-55.515c-4.686-4.686-12.284-4.686-16.971 0L64 336v48z" fill="#3a3a3a" /></svg>
<svg class="i" style="left:702.5px;top:254.5px" width="14" height="14" viewBox="0 0 14 14"><circle cx="7" cy="7" r="6.2" fill="#1fb14c" stroke="#fff" stroke-width="0.8"/><path d="M4,7.2 L6.1,9.2 L10,5" fill="none" stroke="#fff" stroke-width="1.5"/></svg>
<div class="abs" style="left:451px;top:300px;width:1450px;height:47px;background:#cdecf9"></div>
<div class="hl" style="left:451px;top:299px;width:1450px"></div>
<div class="t " style="left:490px;top:317px;color:#1ba1e2">Project…</div>
<div class="t " style="left:580px;top:317px;color:#1ba1e2">20/09/30</div>
<div class="t " style="left:740px;top:317px;color:#1ba1e2">/Classification02/vz_class2_node_01</div>
<div class="t " style="left:1050px;top:317px;color:#1ba1e2">vz_article_04</div>
<div class="t " style="left:1362px;top:317px;color:#1ba1e2">2</div>
<svg class="i" style="left:670.4px;top:304.1px" width="40" height="40" viewBox="0 0 512 512" preserveAspectRatio="xMidYMid meet"><path d="M464 448H48c-26.51 0-48-21.49-48-48V112c0-26.51 21.49-48 48-48h416c26.51 0 48 21.49 48 48v288c0 26.51-21.49 48-48 48zM112 120c-30.928 0-56 25.072-56 56s25.072 56 56 56 56-25.072 56-56-25.072-56-56-56zM64 384h384V272l-87.515-87.515c-4.686-4.686-12.284-4.686-16.971 0L208 320l-55.515-55.515c-4.686-4.686-12.284-4.686-16.971 0L64 336v48z" fill="#1ba1e2" /></svg>
<svg class="i" style="left:702.5px;top:302.5px" width="14" height="14" viewBox="0 0 14 14"><circle cx="7" cy="7" r="6.2" fill="#1fb14c" stroke="#fff" stroke-width="0.8"/><path d="M4,7.2 L6.1,9.2 L10,5" fill="none" stroke="#fff" stroke-width="1.5"/></svg>
<div class="hl" style="left:451px;top:347px;width:1450px"></div>
<div class="t " style="left:490px;top:365px;color:#333">Project…</div>
<div class="t " style="left:580px;top:365px;color:#333">20/09/21</div>
<div class="t " style="left:740px;top:365px;color:#333">/Classification02/vz_class2_node_01</div>
<div class="t " style="left:1050px;top:365px;color:#333">vz_article_01</div>
<div class="t " style="left:1362px;top:365px;color:#333">2</div>
<svg class="i" style="left:670.4px;top:352.1px" width="40" height="40" viewBox="0 0 512 512" preserveAspectRatio="xMidYMid meet"><path d="M464 448H48c-26.51 0-48-21.49-48-48V112c0-26.51 21.49-48 48-48h416c26.51 0 48 21.49 48 48v288c0 26.51-21.49 48-48 48zM112 120c-30.928 0-56 25.072-56 56s25.072 56 56 56 56-25.072 56-56-25.072-56-56-56zM64 384h384V272l-87.515-87.515c-4.686-4.686-12.284-4.686-16.971 0L208 320l-55.515-55.515c-4.686-4.686-12.284-4.686-16.971 0L64 336v48z" fill="#3a3a3a" /></svg>
<svg class="i" style="left:702.5px;top:350.5px" width="14" height="14" viewBox="0 0 14 14"><circle cx="7" cy="7" r="6.2" fill="#1fb14c" stroke="#fff" stroke-width="0.8"/><path d="M4,7.2 L6.1,9.2 L10,5" fill="none" stroke="#fff" stroke-width="1.5"/></svg>
<div class="hl" style="left:451px;top:395px;width:1450px"></div>
<div class="t " style="left:490px;top:413px;color:#333">Project…</div>
<div class="t " style="left:580px;top:413px;color:#333">20/09/21</div>
<div class="t " style="left:740px;top:413px;color:#333">/Classification02/vz_class2_node_01</div>
<div class="t " style="left:1050px;top:413px;color:#333">vz_variation_03</div>
<div class="t " style="left:1362px;top:413px;color:#333">2</div>
<svg class="i" style="left:670.4px;top:400.1px" width="40" height="40" viewBox="0 0 512 512" preserveAspectRatio="xMidYMid meet"><path d="M464 448H48c-26.51 0-48-21.49-48-48V112c0-26.51 21.49-48 48-48h416c26.51 0 48 21.49 48 48v288c0 26.51-21.49 48-48 48zM112 120c-30.928 0-56 25.072-56 56s25.072 56 56 56 56-25.072 56-56-25.072-56-56-56zM64 384h384V272l-87.515-87.515c-4.686-4.686-12.284-4.686-16.971 0L208 320l-55.515-55.515c-4.686-4.686-12.284-4.686-16.971 0L64 336v48z" fill="#3a3a3a" /></svg>
<svg class="i" style="left:702.5px;top:398.5px" width="14" height="14" viewBox="0 0 14 14"><circle cx="7" cy="7" r="6.2" fill="#1fb14c" stroke="#fff" stroke-width="0.8"/><path d="M4,7.2 L6.1,9.2 L10,5" fill="none" stroke="#fff" stroke-width="1.5"/></svg>
<div class="hl" style="left:451px;top:443px;width:1450px"></div>
<div class="t " style="left:490px;top:461px;color:#333">Project…</div>
<div class="t " style="left:580px;top:461px;color:#333">20/07/28</div>
<div class="t " style="left:740px;top:461px;color:#333">/Classification01/ArticleBriefing_Classification_…</div>
<div class="t " style="left:1050px;top:461px;color:#333">AB_V4</div>
<div class="t " style="left:1362px;top:461px;color:#333">2</div>
<svg class="i" style="left:670.4px;top:448.1px" width="40" height="40" viewBox="0 0 512 512" preserveAspectRatio="xMidYMid meet"><path d="M464 448H48c-26.51 0-48-21.49-48-48V112c0-26.51 21.49-48 48-48h416c26.51 0 48 21.49 48 48v288c0 26.51-21.49 48-48 48zM112 120c-30.928 0-56 25.072-56 56s25.072 56 56 56 56-25.072 56-56-25.072-56-56-56zM64 384h384V272l-87.515-87.515c-4.686-4.686-12.284-4.686-16.971 0L208 320l-55.515-55.515c-4.686-4.686-12.284-4.686-16.971 0L64 336v48z" fill="#3a3a3a" /></svg>
<svg class="i" style="left:702.5px;top:446.5px" width="14" height="14" viewBox="0 0 14 14"><circle cx="7" cy="7" r="6.2" fill="#1fb14c" stroke="#fff" stroke-width="0.8"/><path d="M4,7.2 L6.1,9.2 L10,5" fill="none" stroke="#fff" stroke-width="1.5"/></svg>
<div class="hl" style="left:451px;top:491px;width:1450px"></div>
<div class="t " style="left:490px;top:509px;color:#333">Project…</div>
<div class="t " style="left:580px;top:509px;color:#333">20/09/24</div>
<div class="t " style="left:740px;top:509px;color:#333">/Classification01/ArticleBriefing_Classification_…</div>
<div class="t " style="left:1050px;top:509px;color:#333">product-demo</div>
<div class="t " style="left:1362px;top:509px;color:#333">2</div>
<svg class="i" style="left:680px;top:498px" width="24" height="34" viewBox="680 498 24 34"><path d="M686.4,513 C687,505.5 689,501.2 690.8,501.2 C692.6,501.2 695.2,505.5 696.4,513" fill="none" stroke="#7a5238" stroke-width="1"/><path d="M684.2,512.4 Q690.8,510.8 697.6,512.4 Q699.8,521 698.6,528 Q691.4,530.2 684.4,528 Q682.8,520 684.2,512.4 Z" fill="#b4541c"/><path d="M685.4,513.4 Q690.8,512.2 696.6,513.4 Q697.8,516 696.8,518 Q691,515.6 686,518 Q684.6,515.6 685.4,513.4 Z" fill="#c8682c"/><path d="M684.4,524 Q691.4,529 698.6,524 L698.6,528 Q691.4,530.2 684.4,528 Z" fill="#93400f"/></svg>
<div class="hl" style="left:451px;top:539px;width:1450px"></div>
<div class="t " style="left:490px;top:557px;color:#333">Project…</div>
<div class="t " style="left:580px;top:557px;color:#333">20/09/21</div>
<div class="t " style="left:740px;top:557px;color:#333">/Classification02/vz_class2_node_01</div>
<div class="t " style="left:1050px;top:557px;color:#333">vz_variation_05</div>
<div class="t " style="left:1362px;top:557px;color:#333">2</div>
<svg class="i" style="left:670.4px;top:544.1px" width="40" height="40" viewBox="0 0 512 512" preserveAspectRatio="xMidYMid meet"><path d="M464 448H48c-26.51 0-48-21.49-48-48V112c0-26.51 21.49-48 48-48h416c26.51 0 48 21.49 48 48v288c0 26.51-21.49 48-48 48zM112 120c-30.928 0-56 25.072-56 56s25.072 56 56 56 56-25.072 56-56-25.072-56-56-56zM64 384h384V272l-87.515-87.515c-4.686-4.686-12.284-4.686-16.971 0L208 320l-55.515-55.515c-4.686-4.686-12.284-4.686-16.971 0L64 336v48z" fill="#3a3a3a" /></svg>
<svg class="i" style="left:702.5px;top:542.5px" width="14" height="14" viewBox="0 0 14 14"><circle cx="7" cy="7" r="6.2" fill="#1fb14c" stroke="#fff" stroke-width="0.8"/><path d="M4,7.2 L6.1,9.2 L10,5" fill="none" stroke="#fff" stroke-width="1.5"/></svg>
<div class="hl" style="left:451px;top:587px;width:1450px"></div>
<div class="t " style="left:490px;top:605px;color:#333">Project…</div>
<div class="t " style="left:580px;top:605px;color:#333">20/09/21</div>
<div class="t " style="left:740px;top:605px;color:#333">/Classification02/vz_class2_node_01</div>
<div class="t " style="left:1050px;top:605px;color:#333">vz_article_02</div>
<div class="t " style="left:1362px;top:605px;color:#333">2</div>
<svg class="i" style="left:670.4px;top:592.1px" width="40" height="40" viewBox="0 0 512 512" preserveAspectRatio="xMidYMid meet"><path d="M464 448H48c-26.51 0-48-21.49-48-48V112c0-26.51 21.49-48 48-48h416c26.51 0 48 21.49 48 48v288c0 26.51-21.49 48-48 48zM112 120c-30.928 0-56 25.072-56 56s25.072 56 56 56 56-25.072 56-56-25.072-56-56-56zM64 384h384V272l-87.515-87.515c-4.686-4.686-12.284-4.686-16.971 0L208 320l-55.515-55.515c-4.686-4.686-12.284-4.686-16.971 0L64 336v48z" fill="#3a3a3a" /></svg>
<svg class="i" style="left:702.5px;top:590.5px" width="14" height="14" viewBox="0 0 14 14"><circle cx="7" cy="7" r="6.2" fill="#1fb14c" stroke="#fff" stroke-width="0.8"/><path d="M4,7.2 L6.1,9.2 L10,5" fill="none" stroke="#fff" stroke-width="1.5"/></svg>
<div class="hl" style="left:451px;top:635px;width:1450px"></div>
<div class="t " style="left:490px;top:653px;color:#333">Project…</div>
<div class="t " style="left:580px;top:653px;color:#333">20/09/21</div>
<div class="t " style="left:740px;top:653px;color:#333">/Classification02/vz_class2_node_01</div>
<div class="t " style="left:1050px;top:653px;color:#333">vz_variation_02</div>
<div class="t " style="left:1362px;top:653px;color:#333">2</div>
<svg class="i" style="left:670.4px;top:640.1px" width="40" height="40" viewBox="0 0 512 512" preserveAspectRatio="xMidYMid meet"><path d="M464 448H48c-26.51 0-48-21.49-48-48V112c0-26.51 21.49-48 48-48h416c26.51 0 48 21.49 48 48v288c0 26.51-21.49 48-48 48zM112 120c-30.928 0-56 25.072-56 56s25.072 56 56 56 56-25.072 56-56-25.072-56-56-56zM64 384h384V272l-87.515-87.515c-4.686-4.686-12.284-4.686-16.971 0L208 320l-55.515-55.515c-4.686-4.686-12.284-4.686-16.971 0L64 336v48z" fill="#3a3a3a" /></svg>
<svg class="i" style="left:702.5px;top:638.5px" width="14" height="14" viewBox="0 0 14 14"><circle cx="7" cy="7" r="6.2" fill="#1fb14c" stroke="#fff" stroke-width="0.8"/><path d="M4,7.2 L6.1,9.2 L10,5" fill="none" stroke="#fff" stroke-width="1.5"/></svg>
<div class="hl" style="left:451px;top:683px;width:1450px"></div>
<div class="t " style="left:490px;top:701px;color:#333">Project…</div>
<div class="t " style="left:580px;top:701px;color:#333">20/09/29</div>
<div class="t " style="left:740px;top:701px;color:#333">/Classification02/vz_class2_node_01</div>
<div class="t " style="left:1050px;top:701px;color:#333">vz_product_01</div>
<div class="t " style="left:1362px;top:701px;color:#333">2</div>
<svg class="i" style="left:670.4px;top:688.1px" width="40" height="40" viewBox="0 0 512 512" preserveAspectRatio="xMidYMid meet"><path d="M464 448H48c-26.51 0-48-21.49-48-48V112c0-26.51 21.49-48 48-48h416c26.51 0 48 21.49 48 48v288c0 26.51-21.49 48-48 48zM112 120c-30.928 0-56 25.072-56 56s25.072 56 56 56 56-25.072 56-56-25.072-56-56-56zM64 384h384V272l-87.515-87.515c-4.686-4.686-12.284-4.686-16.971 0L208 320l-55.515-55.515c-4.686-4.686-12.284-4.686-16.971 0L64 336v48z" fill="#3a3a3a" /></svg>
<svg class="i" style="left:702.5px;top:686.5px" width="14" height="14" viewBox="0 0 14 14"><circle cx="7" cy="7" r="6.2" fill="#1fb14c" stroke="#fff" stroke-width="0.8"/><path d="M4,7.2 L6.1,9.2 L10,5" fill="none" stroke="#fff" stroke-width="1.5"/></svg>
<div class="hl" style="left:451px;top:731px;width:1450px"></div>
<div class="t " style="left:490px;top:749px;color:#333">Briefin…</div>
<div class="t " style="left:580px;top:749px;color:#333">20/02/13</div>
<div class="t " style="left:740px;top:749px;color:#333">/Classification01/ArticleBriefing_Classification_…</div>
<div class="t " style="left:1050px;top:749px;color:#333">AB_A4</div>
<div class="t " style="left:1362px;top:749px;color:#333">2</div>
<svg class="i" style="left:670.4px;top:736.1px" width="40" height="40" viewBox="0 0 512 512" preserveAspectRatio="xMidYMid meet"><path d="M464 448H48c-26.51 0-48-21.49-48-48V112c0-26.51 21.49-48 48-48h416c26.51 0 48 21.49 48 48v288c0 26.51-21.49 48-48 48zM112 120c-30.928 0-56 25.072-56 56s25.072 56 56 56 56-25.072 56-56-25.072-56-56-56zM64 384h384V272l-87.515-87.515c-4.686-4.686-12.284-4.686-16.971 0L208 320l-55.515-55.515c-4.686-4.686-12.284-4.686-16.971 0L64 336v48z" fill="#3a3a3a" /></svg>
<svg class="i" style="left:702.5px;top:734.5px" width="14" height="14" viewBox="0 0 14 14"><circle cx="7" cy="7" r="6.2" fill="#1fb14c" stroke="#fff" stroke-width="0.8"/><path d="M4,7.2 L6.1,9.2 L10,5" fill="none" stroke="#fff" stroke-width="1.5"/></svg>
<div class="hl" style="left:451px;top:779px;width:1450px"></div>
<div class="t " style="left:490px;top:797px;color:#333">Project…</div>
<div class="t " style="left:580px;top:797px;color:#333">20/09/30</div>
<div class="t " style="left:740px;top:797px;color:#333">/Classification02/vz_class2_node_01</div>
<div class="t " style="left:1050px;top:797px;color:#333">vz_product_02</div>
<div class="t " style="left:1362px;top:797px;color:#333">2</div>
<svg class="i" style="left:670.4px;top:784.1px" width="40" height="40" viewBox="0 0 512 512" preserveAspectRatio="xMidYMid meet"><path d="M464 448H48c-26.51 0-48-21.49-48-48V112c0-26.51 21.49-48 48-48h416c26.51 0 48 21.49 48 48v288c0 26.51-21.49 48-48 48zM112 120c-30.928 0-56 25.072-56 56s25.072 56 56 56 56-25.072 56-56-25.072-56-56-56zM64 384h384V272l-87.515-87.515c-4.686-4.686-12.284-4.686-16.971 0L208 320l-55.515-55.515c-4.686-4.686-12.284-4.686-16.971 0L64 336v48z" fill="#3a3a3a" /></svg>
<svg class="i" style="left:702.5px;top:782.5px" width="14" height="14" viewBox="0 0 14 14"><circle cx="7" cy="7" r="6.2" fill="#1fb14c" stroke="#fff" stroke-width="0.8"/><path d="M4,7.2 L6.1,9.2 L10,5" fill="none" stroke="#fff" stroke-width="1.5"/></svg>
<div class="hl" style="left:451px;top:827px;width:1450px"></div>
<div class="t " style="left:490px;top:845px;color:#333">Project…</div>
<div class="t " style="left:580px;top:845px;color:#333">20/11/23</div>
<div class="t " style="left:740px;top:845px;color:#333">/Classification01/ArticleBriefing_Classification_…</div>
<div class="t " style="left:1050px;top:845px;color:#333">000_test</div>
<div class="t " style="left:1362px;top:845px;color:#333">2</div>
<svg class="i" style="left:670.4px;top:832.1px" width="40" height="40" viewBox="0 0 512 512" preserveAspectRatio="xMidYMid meet"><path d="M464 448H48c-26.51 0-48-21.49-48-48V112c0-26.51 21.49-48 48-48h416c26.51 0 48 21.49 48 48v288c0 26.51-21.49 48-48 48zM112 120c-30.928 0-56 25.072-56 56s25.072 56 56 56 56-25.072 56-56-25.072-56-56-56zM64 384h384V272l-87.515-87.515c-4.686-4.686-12.284-4.686-16.971 0L208 320l-55.515-55.515c-4.686-4.686-12.284-4.686-16.971 0L64 336v48z" fill="#3a3a3a" /></svg>
<svg class="i" style="left:702.5px;top:830.5px" width="14" height="14" viewBox="0 0 14 14"><circle cx="7" cy="7" r="6.2" fill="#1fb14c" stroke="#fff" stroke-width="0.8"/><path d="M4,7.2 L6.1,9.2 L10,5" fill="none" stroke="#fff" stroke-width="1.5"/></svg>
<div class="hl" style="left:451px;top:875px;width:1450px"></div>
<div class="t " style="left:490px;top:893px;color:#333">Project…</div>
<div class="t " style="left:580px;top:893px;color:#333">20/09/21</div>
<div class="t " style="left:740px;top:893px;color:#333">/Classification02/vz_class2_node_01</div>
<div class="t " style="left:1050px;top:893px;color:#333">vz_article_03</div>
<div class="t " style="left:1362px;top:893px;color:#333">2</div>
<svg class="i" style="left:670.4px;top:880.1px" width="40" height="40" viewBox="0 0 512 512" preserveAspectRatio="xMidYMid meet"><path d="M464 448H48c-26.51 0-48-21.49-48-48V112c0-26.51 21.49-48 48-48h416c26.51 0 48 21.49 48 48v288c0 26.51-21.49 48-48 48zM112 120c-30.928 0-56 25.072-56 56s25.072 56 56 56 56-25.072 56-56-25.072-56-56-56zM64 384h384V272l-87.515-87.515c-4.686-4.686-12.284-4.686-16.971 0L208 320l-55.515-55.515c-4.686-4.686-12.284-4.686-16.971 0L64 336v48z" fill="#3a3a3a" /></svg>
<svg class="i" style="left:702.5px;top:878.5px" width="14" height="14" viewBox="0 0 14 14"><circle cx="7" cy="7" r="6.2" fill="#1fb14c" stroke="#fff" stroke-width="0.8"/><path d="M4,7.2 L6.1,9.2 L10,5" fill="none" stroke="#fff" stroke-width="1.5"/></svg>
<div class="hl" style="left:451px;top:923px;width:1450px"></div>
<div class="t " style="left:490px;top:941px;color:#333">Project…</div>
<div class="t " style="left:580px;top:941px;color:#333">20/09/21</div>
<div class="t " style="left:740px;top:941px;color:#333">/Classification02/vz_class2_node_01</div>
<div class="t " style="left:1050px;top:941px;color:#333">vz_variation_01</div>
<div class="t " style="left:1362px;top:941px;color:#333">2</div>
<svg class="i" style="left:670.4px;top:928.1px" width="40" height="40" viewBox="0 0 512 512" preserveAspectRatio="xMidYMid meet"><path d="M464 448H48c-26.51 0-48-21.49-48-48V112c0-26.51 21.49-48 48-48h416c26.51 0 48 21.49 48 48v288c0 26.51-21.49 48-48 48zM112 120c-30.928 0-56 25.072-56 56s25.072 56 56 56 56-25.072 56-56-25.072-56-56-56zM64 384h384V272l-87.515-87.515c-4.686-4.686-12.284-4.686-16.971 0L208 320l-55.515-55.515c-4.686-4.686-12.284-4.686-16.971 0L64 336v48z" fill="#3a3a3a" /></svg>
<svg class="i" style="left:702.5px;top:926.5px" width="14" height="14" viewBox="0 0 14 14"><circle cx="7" cy="7" r="6.2" fill="#1fb14c" stroke="#fff" stroke-width="0.8"/><path d="M4,7.2 L6.1,9.2 L10,5" fill="none" stroke="#fff" stroke-width="1.5"/></svg>
</div></div>
<div class="red" style="left:447px;top:292px;width:1451px;height:60px"></div>
<div class="rn" style="left:422px;top:301px">3</div>
<div class="hl" style="left:451px;top:203px;width:1464px"></div>
<div class="abs" style="left:1901px;top:204px;width:14px;height:761px;background:#f1f1f1"></div>
<div class="abs" style="left:1903px;top:221px;width:12px;height:602px;background:#c1c1c1"></div>
<svg class="i" style="left:1901px;top:204px" width="14" height="761"><path d="M4.5,11 l4,-4 l4,4z" fill="#a3a3a3"/><path d="M4.5,749 l4,4 l4,-4z" fill="#505050"/></svg>
<div class="grey" style="left:66px;top:964px;width:1849px;height:41px;border-top:1px solid #d9d9d9"></div>
<svg class="i" style="left:104.5px;top:978.6px" width="10" height="12" viewBox="-5 -6 10 12"><path d="M-2,-4 L2.2,0 L-2,4" fill="none" stroke="#333" stroke-width="2.4" stroke-linecap="round" stroke-linejoin="round"/></svg>
<svg class="i" style="left:150.5px;top:978.6px" width="10" height="12" viewBox="-5 -6 10 12"><path d="M-2,-4 L2.2,0 L-2,4" fill="none" stroke="#333" stroke-width="2.4" stroke-linecap="round" stroke-linejoin="round"/></svg>
<svg class="i" style="left:249.5px;top:978.6px" width="10" height="12" viewBox="-5 -6 10 12"><path d="M-2,-4 L2.2,0 L-2,4" fill="none" stroke="#333" stroke-width="2.4" stroke-linecap="round" stroke-linejoin="round"/></svg>
<svg class="i" style="left:367.5px;top:978.6px" width="10" height="12" viewBox="-5 -6 10 12"><path d="M-2,-4 L2.2,0 L-2,4" fill="none" stroke="#333" stroke-width="2.4" stroke-linecap="round" stroke-linejoin="round"/></svg>
<svg class="i" style="left:560px;top:978.6px" width="10" height="12" viewBox="-5 -6 10 12"><path d="M-2,-4 L2.2,0 L-2,4" fill="none" stroke="#333" stroke-width="2.4" stroke-linecap="round" stroke-linejoin="round"/></svg>
<svg class="i" style="left:120.6px;top:979px" width="24" height="12" viewBox="-12 -6 24 12"><circle cx="-5.6" cy="0" r="2.1" fill="#333"/><circle cx="0" cy="0" r="2.1" fill="#333"/><circle cx="5.6" cy="0" r="2.1" fill="#333"/></svg>
<svg class="i" style="left:78px;top:977px" width="16" height="16" viewBox="78 977 16 16"><g fill="none" stroke="#333" stroke-width="1.2"><circle cx="86" cy="989.2" r="2"/><path d="M86,987.2 V980"/><path d="M84.6,987.8 Q83.8,984.4 80.4,984"/><path d="M87.4,987.8 Q88.2,984.4 91.6,984"/></g><g fill="#333"><path d="M86,977.6 L88.2,980.6 H83.8 Z"/><path d="M78.6,984 L81.6,981.8 V986.2 Z"/><path d="M93.4,984 L90.4,981.8 V986.2 Z"/></g></svg>
<div class="t " style="left:172px;top:978px;">Projects - en</div>
<div class="t " style="left:271px;top:978px;">vz_test_lv1 - (4)</div>
<div class="t " style="left:389px;top:978px;">vz_test_lv2 - (1) peos: - en (1)</div>
<div class="t " style="left:581px;top:978px;">vz_test_lv3 - (1) peos: - en (11)</div>
<svg class="i" style="left:758.3px;top:978.6px" width="10" height="12" viewBox="-5 -6 10 12"><path d="M-2,-4 L2.2,0 L-2,4" fill="none" stroke="#333" stroke-width="2.4" stroke-linecap="round" stroke-linejoin="round"/></svg>
<div class="t blue" style="left:779px;top:978px;">vz_test_project - peos: - en (19)</div>
</body></html>
